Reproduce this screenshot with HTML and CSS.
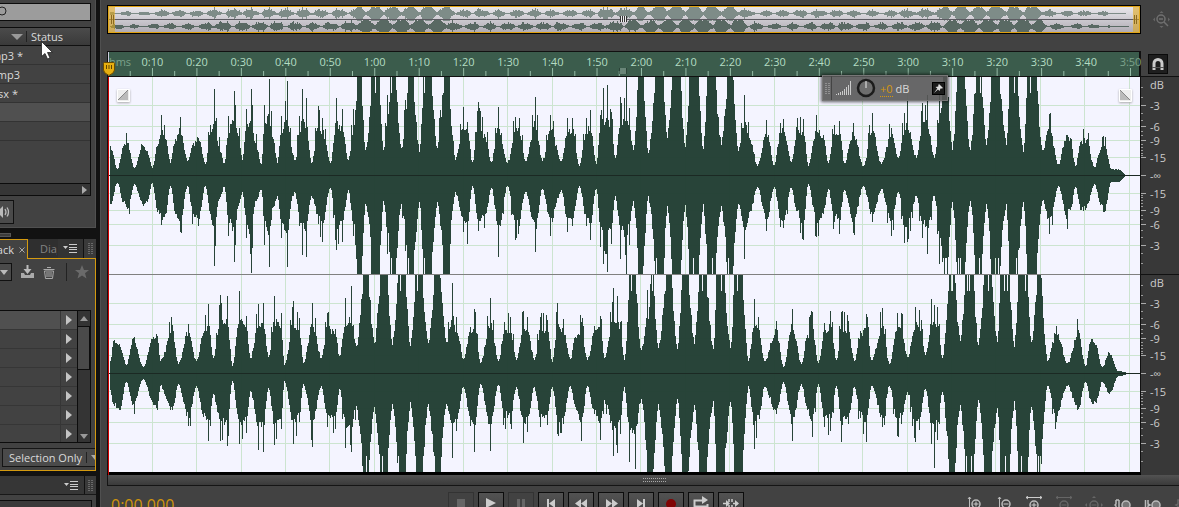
FILE: index.html
```
<!DOCTYPE html>
<html lang="en">
<head>
<meta charset="utf-8">
<title>Waveform editor</title>
<link rel="stylesheet" href="styles.css">
</head>
<body>
<div class="app">
  <aside class="side">
    <section class="panel files">
      <div class="search"><svg class="lens" width="7" height="12" viewBox="0 0 7 12"><circle cx="2" cy="5" r="4" fill="none" stroke="#222"/></svg><input class="search-input" type="text" aria-label="Search files"></div>
      <div class="list">
        <div class="list-head"><svg width="12" height="6"><path d="M0 0h12l-6 6z" fill="#999"/></svg><span class="head-sep"></span><span>Status</span></div>
        <div class="row"><span class="cut">mp3 *</span></div>
        <div class="row"><span class="cut short">mp3</span></div>
        <div class="row"><span class="cut tiny">sx *</span></div>
        <div class="row lit"></div>
        <div class="row"></div>
        <div class="row tall"></div>
        <div class="hscroll"><svg width="6" height="8"><path d="M0 0l5 4-5 4z" fill="#aaa"/></svg></div>
      </div>
      <button class="speaker" aria-label="Auto-play"><svg width="13" height="14" viewBox="0 0 13 14"><path d="M0 4l3-3v12l-3-3z" fill="#bbb"/><path d="M5 4q2 3 0 6M7 2.500q3 4.500 0 9" fill="none" stroke="#bbb" stroke-width="1.300"/></svg></button>
    </section>
    <div class="divider"><span></span></div>
    <section class="rack">
      <div class="tabs">
        <button class="tab active"><span class="tab-name">ack</span><svg width="6" height="6"><path d="M.5.5l5 5M5.500.5l-5 5" stroke="#aaa"/></svg></button>
        <button class="tab idle"><span class="tab-clip">Diag</span></button>
        <button class="menu" aria-label="Panel menu"><svg width="15" height="9"><path d="M0 2h5l-2.500 3z" fill="#ccc"/><path d="M6 .5h8M6 3.500h8M6 5.500h8M6 8.500h8" stroke="#ccc"/></svg></button>
        <span class="grip"><svg width="5" height="11"><path d="M1 0v11M4 0v11" stroke="#999" stroke-dasharray="1 1"/></svg></span>
      </div>
      <div class="rack-body">
        <div class="tools">
          <button class="drop" aria-label="Presets"><svg width="8" height="5"><path d="M0 0h8l-4 5z" fill="#bbb"/></svg></button>
          <button class="tool" aria-label="Save preset"><svg width="15" height="14" viewBox="0 0 15 14"><path d="M1 8h3l1 2h5l1-2h3v5H1z" fill="#aaa"/><path d="M6.500 0h2v4h3L7.500 9l-4-5h3z" fill="#bbb"/></svg></button>
          <button class="tool" aria-label="Delete preset"><svg width="12" height="13" viewBox="0 0 12 13"><path d="M4 1.500h4M.5 3.500h11M1.500 5l1 7.500h7l1-7.500zM4 6v5M6 6v5M8 6v5" fill="none" stroke="#aaa"/></svg></button>
          <span class="tool-sep"></span>
          <button class="tool" aria-label="Favorite"><svg width="14" height="14" viewBox="0 0 14 14"><path d="M7 0l2 5h5l-4 3.200 1.500 5.300L7 10.500 2.500 13.500 4 8.200 0 5h5z" fill="#6a6a6a"/></svg></button>
        </div>
        <div class="slots">
          <div class="slot-list" id="slots"></div>
          <div class="vscroll"><svg width="8" height="5"><path d="M0 5h8l-4-5z" fill="#999"/></svg><span class="thumb"></span><svg width="8" height="5"><path d="M0 0h8l-4 5z" fill="#999"/></svg></div>
        </div>
        <button class="scope"><span>Selection Only</span><i></i><svg width="8" height="5"><path d="M0 0h8l-4 5z" fill="#aaa"/></svg></button>
      </div>
    </section>
    <section class="lower">
      <div class="lower-head">
        <button class="menu" aria-label="Panel menu"><svg width="15" height="9"><path d="M0 2h5l-2.500 3z" fill="#ccc"/><path d="M6 .5h8M6 3.500h8M6 5.500h8M6 8.500h8" stroke="#ccc"/></svg></button>
        <span class="grip"><svg width="5" height="11"><path d="M1 0v11M4 0v11" stroke="#999" stroke-dasharray="1 1"/></svg></span>
      </div>
      <div class="lower-body"></div>
    </section>
  </aside>

  <main class="editor">
    <div class="line">
      <div class="overview" id="overview"></div>
      <div class="gutter">
        <button class="plain" aria-label="Zoom out full"><svg width="17" height="17" viewBox="0 0 17 17"><circle cx="8" cy="8" r="4" fill="none" stroke="#707070" stroke-width="1.500"/><path d="M6 8h4M11 11l4 4" stroke="#707070" stroke-width="1.500"/><path d="M8.500 0l2 2h-4zM0 8.500l2-2v4zM17 8.500l-2-2v4zM8.500 17l2-2h-4z" fill="#666"/></svg></button>
      </div>
    </div>
    <div class="line ruler-line">
      <div class="ruler-wrap"><svg class="ruler" id="ruler"></svg></div>
      <div class="gutter">
        <button class="snap" aria-label="Snapping"><svg width="12" height="12" viewBox="0 0 12 12"><path d="M2 12V5.500a4 4 0 0 1 8 0V12" fill="none" stroke="#ccc" stroke-width="3"/><path d="M0 9.500h12" stroke="#555"/></svg></button>
      </div>
    </div>
    <div class="line">
      <div class="waves" id="waves">
        <svg class="fade fade-in" width="13" height="13"><path d="M.5.500h12v12H.5z" fill="#eee" stroke="#fff"/><path d="M11 1v10H1z" fill="#bbb"/><path d="M1 11L11 1" stroke="#888"/></svg>
        <svg class="fade fade-out" width="13" height="13"><path d="M.5.500h12v12H.5z" fill="#eee" stroke="#fff"/><path d="M1 1v10h10z" fill="#bbb"/><path d="M1 1l10 10" stroke="#888"/></svg>
        <svg class="pin" width="12" height="15" viewBox="0 0 12 15"><path d="M.5 1.500q0-1 1-1h9q1 0 1 1V8q0 3-5.500 5.500Q.5 11 .5 8z" fill="#e6ae10" stroke="#6a4c00"/><path d="M3.500 3v4M6 3v4M8.500 3v4" stroke="#5e4400"/></svg>
        <div class="hud">
          <span class="hud-grip"><svg width="5" height="11"><path d="M1 0v11M4 0v11" stroke="#bbb" stroke-dasharray="1 1"/></svg></span>
          <svg width="16" height="14"><path d="M.5 13v1M2.500 12v2M4.500 11v3M6.500 10v4M8.500 8v6M10.500 6v8M12.500 4v10M14.500 0v14" stroke="#ccc"/></svg>
          <svg width="20" height="20"><circle cx="10" cy="10" r="8" fill="#6d6d6d" stroke="#1c1c1c" stroke-width="2.500"/><path d="M10 3v7" stroke="#eee"/></svg>
          <span class="gain"><b>+0</b> dB</span>
          <button class="pinned" aria-label="Pin"><svg width="9" height="9" viewBox="0 0 9 9"><path d="M5 0l4 4-1 .5-1.500 0L5.500 7 4 5.500 0 9l3.300-4.500L1.500 3 4.300 2.500V1z" fill="#ddd"/></svg></button>
        </div>
      </div>
      <div class="gutter scale"><svg id="scale"></svg></div>
    </div>
    <div class="hbar"><svg width="24" height="4"><path d="M0 .5h24M0 3.500h24" stroke="#aaa" stroke-dasharray="1 1"/></svg></div>
    <div class="transport">
      <span class="time">0:00.000</span>
      <div class="buttons">
        <button class="key off" aria-label="Stop"><svg width="20" height="14"><path d="M6 3h8v8H6z" fill="#666"/></svg></button>
        <button class="key" aria-label="Play"><svg width="20" height="14"><path d="M5 2l10 5-10 5z" fill="#ccc"/></svg></button>
        <button class="key off" aria-label="Pause"><svg width="20" height="14"><path d="M6 3h3v9H6zM11 3h3v9h-3z" fill="#666"/></svg></button>
        <button class="key" aria-label="To start"><svg width="20" height="14"><path d="M6 3h2v9H6zM14 3v9L8 7.500z" fill="#ccc"/></svg></button>
        <button class="key" aria-label="Rewind"><svg width="20" height="14"><path d="M10 3v9L4 7.500zM16 3v9l-6-4.500z" fill="#ccc"/></svg></button>
        <button class="key" aria-label="Fast forward"><svg width="20" height="14"><path d="M5 3v9l6-4.500zM11 3v9l6-4.500z" fill="#ccc"/></svg></button>
        <button class="key" aria-label="To end"><svg width="20" height="14"><path d="M6 3v9l6-4.500zM12 3h2v9h-2z" fill="#ccc"/></svg></button>
        <button class="key" aria-label="Record"><svg width="20" height="14"><circle cx="10" cy="8" r="5" fill="#800404"/></svg></button>
        <button class="key" aria-label="Loop"><svg width="20" height="14"><path d="M10 4.500H3.500v6h13V8M9 4.500h3" fill="none" stroke="#ccc" stroke-width="2"/><path d="M11 0v8l6-4z" fill="#ccc"/></svg></button>
        <button class="key" aria-label="Skip selection"><svg width="20" height="14"><path d="M2 7.500h5M12 7.500h5M8 3v3M11 3v3M8 9v4M11 9v4" stroke="#ccc" stroke-width="1.500"/><path d="M5 4v7l4-3.500zM14 4v7l4-3.500z" fill="#ccc"/></svg></button>
      </div>
      <div class="zooms">
        <button class="plain" aria-label="Zoom in amplitude"><svg width="20" height="14"><path d="M5.500 14V1M4 3l1.500-2L7 3" fill="none" stroke="#bbb"/><circle cx="12" cy="8" r="4" fill="none" stroke="#bbb" stroke-width="1.500"/><path d="M9.500 8h5M12 5.500v5" stroke="#ccc"/></svg></button>
        <button class="plain" aria-label="Zoom out amplitude"><svg width="20" height="14"><path d="M5.500 14V1M4 3l1.500-2L7 3" fill="none" stroke="#bbb"/><circle cx="12" cy="8" r="4" fill="none" stroke="#bbb" stroke-width="1.500"/><path d="M9.500 8h5" stroke="#ccc"/></svg></button>
        <button class="plain" aria-label="Zoom in time"><svg width="20" height="14"><path d="M2 1.500h16M4 0L2 1.500 4 3M16 0l2 1.500L16 3" fill="none" stroke="#ccc"/><circle cx="10" cy="9" r="4" fill="none" stroke="#bbb" stroke-width="1.500"/><path d="M7.500 9h5M10 6.500v5" stroke="#ccc"/></svg></button>
        <button class="plain" aria-label="Zoom out time"><svg width="20" height="14"><path d="M2 1.500h16M4 0L2 1.500 4 3M16 0l2 1.500L16 3" fill="none" stroke="#666"/><circle cx="10" cy="9" r="4" fill="none" stroke="#666" stroke-width="1.500"/><path d="M7.500 9h5" stroke="#666"/></svg></button>
        <button class="plain" aria-label="Zoom out full"><svg width="20" height="14"><path d="M10 0l2 2H8zM1 9l2-2v4zM19 9l-2-2v4z" fill="#666"/><circle cx="10" cy="9" r="4" fill="none" stroke="#666" stroke-width="1.500"/><path d="M7.500 9h5" stroke="#666"/></svg></button>
        <button class="plain" aria-label="Zoom to in point"><svg width="20" height="14"><path d="M2 4h3M5 4v10M2 4v4L1 9l1 1v4" fill="none" stroke="#bbb" stroke-width="1.500"/><circle cx="12" cy="9" r="4" fill="#777" stroke="#bbb" stroke-width="1.500"/></svg></button>
        <button class="plain" aria-label="Zoom to out point"><svg width="20" height="14"><path d="M1.500 4v10M4 4v4l2 1-2 1v4" fill="none" stroke="#bbb" stroke-width="1.500"/><circle cx="12" cy="9" r="4" fill="#777" stroke="#bbb" stroke-width="1.500"/></svg></button>
        <button class="plain" aria-label="Zoom to selection"><svg width="20" height="14"><path d="M6 4H4v4L2 9l2 1v4h2" fill="none" stroke="#666" stroke-width="1.500"/></svg></button>
      </div>
    </div>
  </main>
  <svg class="cursor" width="12" height="19" viewBox="0 0 12 19"><path d="M.5.5v15l3.500-3 2.500 5.500 2.500-1-2.500-5.500h5z" fill="#fff" stroke="#222" stroke-width=".8"/></svg>
</div>
<script src="wave.js"></script>
</body>
</html>
```
FILE: styles.css
```
* { box-sizing: border-box; }
body {
  margin: 0;
  background: #121212;
  color: #dadada;
  font: 11px/16px "Open Sans", "Noto Sans", sans-serif;
}
button { margin: 0; padding: 0; border: 0; background: none; color: inherit; font: inherit; }
svg { display: block; flex: none; }
.app { position: relative; display: flex; gap: 4px; height: 100vh; overflow: hidden; }

/* left column */
.side { flex: none; width: 96px; }
.panel { height: 228px; background: #424242; border-right: 1px solid #505050; border-bottom: 1px solid #505050; padding: 3px 4px 0 0; }
.search { display: flex; height: 18px; align-items: center; background: #9c9c9c; border: 1px solid #0c0c0c; border-left: 0; }
.search-input { flex: 1; min-width: 0; height: 16px; border: 0; padding: 0; background: transparent; }
.list { margin-top: 6px; border: 1px solid #0c0c0c; border-left: 0; }
.list-head { display: flex; align-items: center; gap: 3px; height: 18px; padding-left: 11px; line-height: 14px; background: linear-gradient(#4b4b4b, #3a3a3a); border-bottom: 1px solid #111; }
.head-sep { width: 1px; height: 11px; background: #222; margin-right: 1px; }
.row { height: 19px; border-bottom: 1px solid #333; background: #424242; }
.row.lit { background: #505050; }
.row.tall { height: 43px; border-bottom: 1px solid #0c0c0c; }
.cut { display: flex; justify-content: flex-end; width: 23px; overflow: hidden; white-space: nowrap; line-height: 19px; }
.cut.short { width: 20px; }
.cut.tiny { width: 18px; }
.hscroll { display: flex; justify-content: flex-end; align-items: center; height: 11px; padding-right: 2px; background: #363636; }
.speaker { display: flex; align-items: center; width: 14px; height: 24px; margin-top: 4px; border: 1px solid #111; border-left: 0; background: #4a4a4a; }
.divider { height: 11px; padding-top: 5px; }
.divider span { display: block; width: 11px; height: 4px; background: #3c3c3c; border: 1px solid #555; border-left: 0; }
.tabs { display: flex; height: 19px; }
.tab { display: flex; align-items: center; height: 19px; }
.tab.active { position: relative; height: 20px; width: 28px; gap: 5px; background: #424242; border-top: 1px solid #d49a10; border-right: 1px solid #d49a10; }
.tab-name { display: flex; justify-content: flex-end; width: 14px; overflow: hidden; }
.tab.idle { width: 30px; padding-left: 12px; background: #2f2f2f; color: #828282; }
.tab-clip { width: 17px; overflow: hidden; text-align: left; }
.menu { display: flex; align-items: center; justify-content: center; width: 26px; background: #333; border-right: 1px solid #111; }
.grip { display: flex; flex: 1; align-items: center; justify-content: center; background: #3a3a3a; }
.rack-body { height: 213px; padding: 4px 0 0; background: #424242; border: 1px solid #d49a10; border-left: 0; }
.tools { display: flex; align-items: center; height: 18px; }
.drop { display: flex; align-items: center; width: 12px; height: 18px; border: 1px solid #111; border-left: 0; background: #4a4a4a; }
.tool { margin-left: 8px; }
.tool-sep { width: 1px; height: 18px; margin-left: 11px; background: #222; }
.slots { display: flex; height: 133px; margin: 29px 4px 0 0; border: 1px solid #0c0c0c; border-left: 0; }
.slot-list { flex: 1; overflow: hidden; }
.slot { display: flex; height: 19px; justify-content: flex-end; border-bottom: 1px solid #363636; }
.slot:first-child { background: #505050; }
.slot button { display: flex; align-items: center; width: 17px; padding-left: 5px; border-left: 1px solid #363636; }
.vscroll { display: flex; flex-direction: column; align-items: center; width: 13px; padding: 5px 0 3px; background: #343434; border-left: 1px solid #0c0c0c; }
.thumb { align-self: stretch; height: 44px; margin: 5px 0 auto; background: #4a4a4a; border: 1px solid #0c0c0c; border-left: 0; }
.scope { display: flex; align-items: center; gap: 4px; width: 93px; height: 19px; margin: 5px 0 0 2px; padding-left: 6px; overflow: hidden; white-space: nowrap; line-height: 14px; background: #4a4a4a; border: 1px solid #151515; border-right: 0; }
.scope i { flex: none; width: 1px; height: 11px; background: #222; }
.lower { margin-top: 5px; }
.lower-head { display: flex; justify-content: flex-end; height: 19px; background: #363636; border-bottom: 1px solid #181818; }
.lower-head .menu { width: 27px; background: none; }
.lower-head .grip { flex: none; width: 11px; }
.lower-body { height: 40px; padding-top: 5px; background: #424242; }
.lower-body::before { content: ""; display: block; width: 91px; height: 30px; border: 1px solid #0c0c0c; border-left: 0; background: #3a3a3a; }

/* editor */
.editor { flex: 1; min-width: 0; background: #424242; border-left: 1px solid #505050; padding: 5px 0 0 6px; }
.line { display: flex; }
.gutter { flex: none; width: 38px; display: flex; align-items: center; padding-left: 12px; }
.overview { position: relative; flex: 1; height: 29px; background: linear-gradient(#ebe9ee, #aeaab2); border: 1px solid #000; }
.overview svg { width: 100%; height: 27px; }
.plain { display: flex; }
.ruler-line { margin-top: 17px; }
.ruler-wrap { flex: 1; height: 26px; border: 1px solid #111; border-right-width: 2px; background: #3b5c4c; }
.ruler { width: 100%; height: 24px; overflow: visible; }
.ruler text { fill: #b4dcc3; text-anchor: middle; }
.ruler .dim { fill: #7ba38b; }
.ruler-line .gutter { padding-left: 7px; border-bottom: 1px solid #111; }
.snap { display: flex; align-items: center; justify-content: center; width: 20px; height: 20px; background: #1e1e1e; border: 1px solid #0a0a0a; }
.waves { position: relative; flex: 1; background: #f4f4ff; border-left: 1px solid #111; border-bottom: 3px solid #000; border-right: 1px solid #111; }
.waves > .lane { width: 100%; height: 197px; }
.waves > .lane + .lane { height: 198px; border-top: 1px solid #808080; }
.waves::after { content: ""; position: absolute; left: 0; top: 0; bottom: -3px; width: 1px; background: #d20000; }
.fade { position: absolute; top: 12px; filter: drop-shadow(0 1px 1px #aaa); }
.fade-in { left: 9px; }
.fade-out { right: 8px; }
.pin { position: absolute; left: -5px; top: -15px; z-index: 2; }
.hud { position: absolute; right: 192px; top: -2px; display: flex; align-items: center; gap: 4px; width: 126px; height: 26px; padding-right: 2px; background: rgba(88, 88, 88, .9); border: 1px solid #777; box-shadow: 0 0 3px 1px rgba(0, 0, 0, .6); }
.hud-grip { display: flex; align-items: center; justify-content: center; width: 9px; height: 24px; border-right: 1px solid #444; }
.gain b { color: #d6980e; font-weight: 400; border-bottom: 1px dotted #d6980e; }
.gain { flex: 1; white-space: nowrap; line-height: 13px; }
.pinned { display: flex; align-items: center; justify-content: center; width: 13px; height: 13px; background: #1c1c1c; border: 1px solid #000; }
.scale { align-items: stretch; padding: 0; background: #383838; }
.scale svg { width: 38px; height: 398px; }
.scale text { fill: #ccc; }
.hbar { display: flex; align-items: center; justify-content: center; height: 11px; margin-right: -1px; padding-left: 22px; background: linear-gradient(#525252, #3a3a3a); border: 1px solid #151515; border-top: 0; }
.transport { display: flex; height: 40px; padding: 6px 0 0 4px; }
.time { flex: none; width: 337px; color: #d0940c; font-size: 16px; line-height: 26px; }
.buttons { display: flex; gap: 4px; }
.key { display: flex; flex: none; align-items: flex-start; justify-content: center; width: 26px; height: 26px; padding-top: 3px; background: linear-gradient(#525252, #404040); border: 1px solid #0c0c0c; }
.key.off { background: #424242; border-color: #333; }
.zooms { display: flex; gap: 10px; margin: 4px -15px 0 auto; }
.cursor { position: absolute; left: 41px; top: 41px; }
```
FILE: wave.js
```
// Keypoints of each channel: x, height above zero, depth below zero
const left = `2 29 28,9 6 7,15 29 26,19 32 33,26 7 8,34 30 28,39 24 26,44 7 7,49 29 36,53 60 49,57 36 38,62 12 10,67 36 38,72 58 56,79 14 10,85 32 38,90 37 50,97 11 10,102 50 38,106 86 90,110 29 25,116 12 11,120 59 60,126 84 86,130 39 30,134 15 16,138 66 62,143 86 97,147 32 25,153 11 14,156 70 69,161 96 91,165 36 31,169 12 20,173 59 62,179 94 91,184 22 20,187 15 17,191 59 50,194 86 79,198 77 81,203 12 20,210 69 48,214 57 66,222 12 12,228 77 74,234 66 66,240 15 14,245 66 60,249 99 99,253 99 99,257 25 28,261 58 48,263 99 99,271 99 99,275 25 25,279 80 78,282 99 99,287 99 99,293 27 28,297 75 75,299 99 99,305 99 99,311 23 26,315 99 99,323 99 99,329 27 26,332 65 50,335 99 99,341 99 99,344 40 35,347 15 16,355 68 56,359 53 68,364 13 10,370 73 55,377 38 38,383 13 12,390 68 81,399 12 10,407 58 64,411 57 50,417 14 16,427 78 76,434 14 13,442 60 60,453 14 14,459 57 56,464 57 50,471 9 10,478 57 50,482 65 64,488 11 13,492 60 71,495 87 88,499 90 96,503 63 68,507 17 20,512 78 83,518 99 98,521 67 69,525 25 25,530 99 90,535 99 90,540 22 20,547 99 99,555 99 99,559 37 30,564 99 99,572 99 99,577 28 29,581 99 99,590 99 99,595 26 28,599 99 99,607 99 99,613 30 30,619 99 99,625 95 90,630 24 28,636 80 83,642 35 35,649 9 11,658 55 55,666 10 11,672 52 51,675 56 52,683 13 12,688 48 35,695 56 64,700 9 8,708 60 61,715 40 38,720 12 13,726 50 46,731 54 58,736 12 14,745 52 57,755 9 10,764 62 46,773 11 13,783 47 60,790 17 16,796 62 67,799 74 66,808 17 20,814 72 62,819 80 78,826 17 20,831 80 88,835 99 99,839 99 99,844 25 26,849 99 99,856 99 99,862 25 25,867 99 99,873 99 99,878 30 28,883 99 99,891 99 99,898 30 28,901 99 99,909 99 99,915 23 26,919 99 99,928 99 99,934 25 25,941 61 58,950 11 10,958 40 43,962 37 34,967 9 11,973 34 34,978 35 32,986 8 8,993 28 28,996 29 36,1003 6 6,1010 6 6,1018 0 0`;
const right = `2 12 16,5 32 30,11 29 36,18 8 8,25 35 30,35 6 5,44 34 28,49 37 36,52 12 12,64 48 36,70 9 10,80 49 52,88 12 12,95 40 43,100 69 67,105 15 20,112 78 67,119 77 72,124 7 7,131 82 70,138 57 59,142 15 17,150 69 76,155 70 78,160 16 14,166 77 71,173 60 55,176 8 7,185 72 70,191 55 48,195 10 10,204 70 73,213 15 12,219 60 53,227 44 55,231 17 15,237 75 74,243 87 78,248 27 32,255 99 99,260 99 99,266 30 33,272 99 99,279 99 99,284 28 30,290 99 99,297 99 99,302 27 28,307 99 93,314 99 99,320 30 30,326 95 93,332 95 99,338 31 30,344 90 84,349 40 45,355 14 13,362 46 52,366 64 78,372 10 10,382 75 77,390 12 11,396 51 44,402 56 50,408 13 13,415 62 69,419 56 58,426 13 13,432 56 53,439 53 51,444 11 13,449 70 60,455 54 50,462 14 12,467 36 33,473 51 67,479 13 12,486 47 40,492 57 66,496 15 26,505 85 82,509 77 79,512 51 60,516 13 13,521 99 88,527 99 95,533 23 25,539 83 91,543 99 99,545 99 95,550 25 30,557 99 99,563 99 99,569 24 25,574 99 95,580 99 97,586 29 31,591 99 97,598 99 99,605 24 27,608 99 99,616 99 99,622 25 28,626 99 93,634 99 99,640 12 12,646 74 75,651 43 45,656 12 13,668 52 40,675 6 8,684 64 67,693 9 10,699 38 36,704 61 63,710 10 10,716 50 53,722 62 57,728 13 12,733 61 68,740 52 50,746 12 13,752 42 44,758 59 68,763 13 12,774 65 53,781 9 12,789 60 62,793 60 50,799 16 18,807 66 68,811 63 56,817 18 15,823 74 70,826 68 94,829 66 66,834 15 18,841 99 99,846 99 99,852 32 31,857 99 99,865 99 99,870 28 26,876 99 99,883 99 99,889 31 34,892 99 99,901 99 99,906 26 27,910 99 99,919 99 99,923 31 33,929 95 95,933 95 90,939 12 12,948 47 48,959 10 12,970 43 35,977 7 8,983 34 28,987 28 28,994 6 8,1001 20 20,1010 2 2,1021 0 0`;
const parse = s => s.split(',').map(p => p.split(' ').map(Number));
const noise = n => { const v = Math.sin(n * 127.1) * 43758.5453; return v - Math.floor(v); };

// Height of one side of the wave at every horizontal step
function columns(points, side) {
  const out = [];
  const at = i => points[i] ? points[i][side] : 0;
  // A lone high point is a thin spike over a lower body; a loud run keeps its height
  const body = i => {
    const h = at(i);
    if (h >= 90 && (at(i - 1) >= 90 || at(i + 1) >= 90)) return h;
    return h > 38 ? 38 + (h - 38) * 0.35 : h;
  };
  for (let i = 0; i < points.length - 1; i++) {
    const a = points[i], b = points[i + 1];
    const full = at(i) >= 90 && at(i + 1) >= 90;
    const ends = [body(i), body(i + 1)];
    const lo = Math.min(...ends), hi = Math.max(...ends);
    for (let x = a[0]; x < b[0]; x++) {
      const t = (x - a[0]) / (b[0] - a[0]);
      const rise = ends[0] < ends[1] ? t : 1 - t;
      let h;
      if (full) h = noise(x + side * 9) > 0.9 ? 82 : 99;
      else if (x === a[0]) h = at(i);
      else {
        const smooth = rise * rise * (3 - 2 * rise);
        h = lo + (hi - lo) * (hi >= 90 ? Math.pow(rise, 1.5) : smooth);
        const n = noise(x * 3 + side);
        h *= 0.9 + n * 0.2;
        if (n > 0.86 && h > 30 && hi < 90) h *= 1.25;
      }
      out[x] = Math.min(99, h);
    }
  }
  return out;
}
function shape(points, mid, size) {
  const up = columns(points, 1), down = columns(points, 2);
  let d = '';
  for (let x = 2; x < up.length; x++) {
    const u = size(up[x]), v = size(down[x]);
    d += `M${x} ${mid - u}h1v${u + v + 1}h-1z`;
  }
  return d;
}
const whole = h => Math.round(h);
const small = h => Math.round(Math.max(0, h - 12) * 0.075);
const chans = [parse(left), parse(right)];
const pct = n => (n / 1032 * 100).toFixed(4) + '%';
const levels = [-70, -49, -35, -18, 18, 35, 49, 70];
const waves = document.getElementById('waves');
let lanes = '';
chans.forEach(c => {
  let g = '';
  levels.forEach(l => g += `<path d="M0 ${98 + l}.5h4000"/>`);
  for (let i = 1; i < 24; i++) g += `<line x1="${pct(44.4 * i)}" x2="${pct(44.4 * i)}" y1="0" y2="198"/>`;
  lanes += `<svg class="lane"><g stroke="#cce4d0" shape-rendering="crispEdges">${g}</g>
    <svg width="100%" height="198" viewBox="0 0 1032 198" preserveAspectRatio="none" shape-rendering="crispEdges"><path d="${shape(c, 98, whole)}" fill="#244035" fill-opacity=".98"/></svg>
    <path d="M0 98.5h4000" stroke="#1b2923" shape-rendering="crispEdges"/></svg>`;
});
waves.insertAdjacentHTML('afterbegin', lanes);

document.getElementById('overview').innerHTML = `<svg>
  <svg width="100%" height="27" viewBox="0 0 1032 27" preserveAspectRatio="none">
    <path d="${shape(chans[0], 7, small)}" fill="#7e8c88"/><path d="${shape(chans[1], 20, small)}" fill="#596963"/></svg>
  <path d="M0 13.500h4000" stroke="#5b5960"/>
  <rect x="0" y="0" width="100%" height="27" fill="none" stroke="#e0a010" stroke-width="2"/>
  <rect width="7" height="27" fill="#e0a820" fill-opacity=".6"/><path d="M3.500 9v9M5.500 9v9" stroke="#8b6a20"/>
  <svg x="100%" overflow="visible"><rect x="-7" width="7" height="27" fill="#e0a820" fill-opacity=".6"/><path d="M-3.500 9v9M-5.500 9v9" stroke="#8b6a20"/></svg>
  <svg x="50%" overflow="visible"><path d="M-3.500 10v6M-1.500 10v6M.5 10v6M2.500 10v6" stroke="#333"/><path d="M-2.500 10v6M-.5 10v6M1.500 10v6" stroke="#eee"/></svg></svg>`;

let r = '';
for (let i = 1; i < 47; i++) {
  const x = pct(22.25 * i);
  r += `<line x1="${x}" x2="${x}" y1="${i % 2 ? 19 : 16}" y2="24" stroke="#95bba6"/>`;
  if (i % 2 === 0) {
    const s = i * 5;
    r += `<text x="${x}" y="14"${s === 230 ? ' class="dim"' : ''}>${Math.floor(s / 60)}:${String(s % 60).padStart(2, '0')}</text>`;
  }
}
document.getElementById('ruler').innerHTML = `<text class="dim" x="12" y="14">hms</text>${r}
  <path d="M.5 0v24" stroke="#ccd" /><svg x="50%" overflow="visible"><path d="M-3.500 16v6M-1.500 16v6M.5 16v6M2.500 16v6" stroke="#1c2b24"/><path d="M-2.500 16v6M-.5 16v6M1.500 16v6" stroke="#a9c9b8"/></svg>`;

let s = '';
[98, 296].forEach(mid => {
  s += `<text x="9" y="${mid - 86}">dB</text><text x="9" y="${mid + 5}">-∞</text><path d="M0 ${mid}.5h5" stroke="#aaa"/>`;
  [[70, '-3'], [49, '-6'], [35, '-9'], [18, '-15']].forEach(([d, t]) => {
    [-d, d].forEach(o => s += `<text x="9" y="${mid + o + 5}">${t}</text><path d="M0 ${mid + o}.5h5" stroke="#aaa"/>`);
  });
  [88, 78, 62, 55, 44, 40, 31, 28, 25, 22, 20].forEach(d => [-d, d].forEach(o => s += `<path d="M0 ${mid + o}.5h2" stroke="#999"/>`));
});
document.getElementById('scale').innerHTML = s + '<path d="M0 197.500h38" stroke="#111"/>';

document.getElementById('slots').innerHTML = Array(7).fill('<div class="slot"><button aria-label="Open slot"><svg width="6" height="10"><path d="M0 0l6 5-6 5z" fill="#c4c4c4"/></svg></button></div>').join('');
```
